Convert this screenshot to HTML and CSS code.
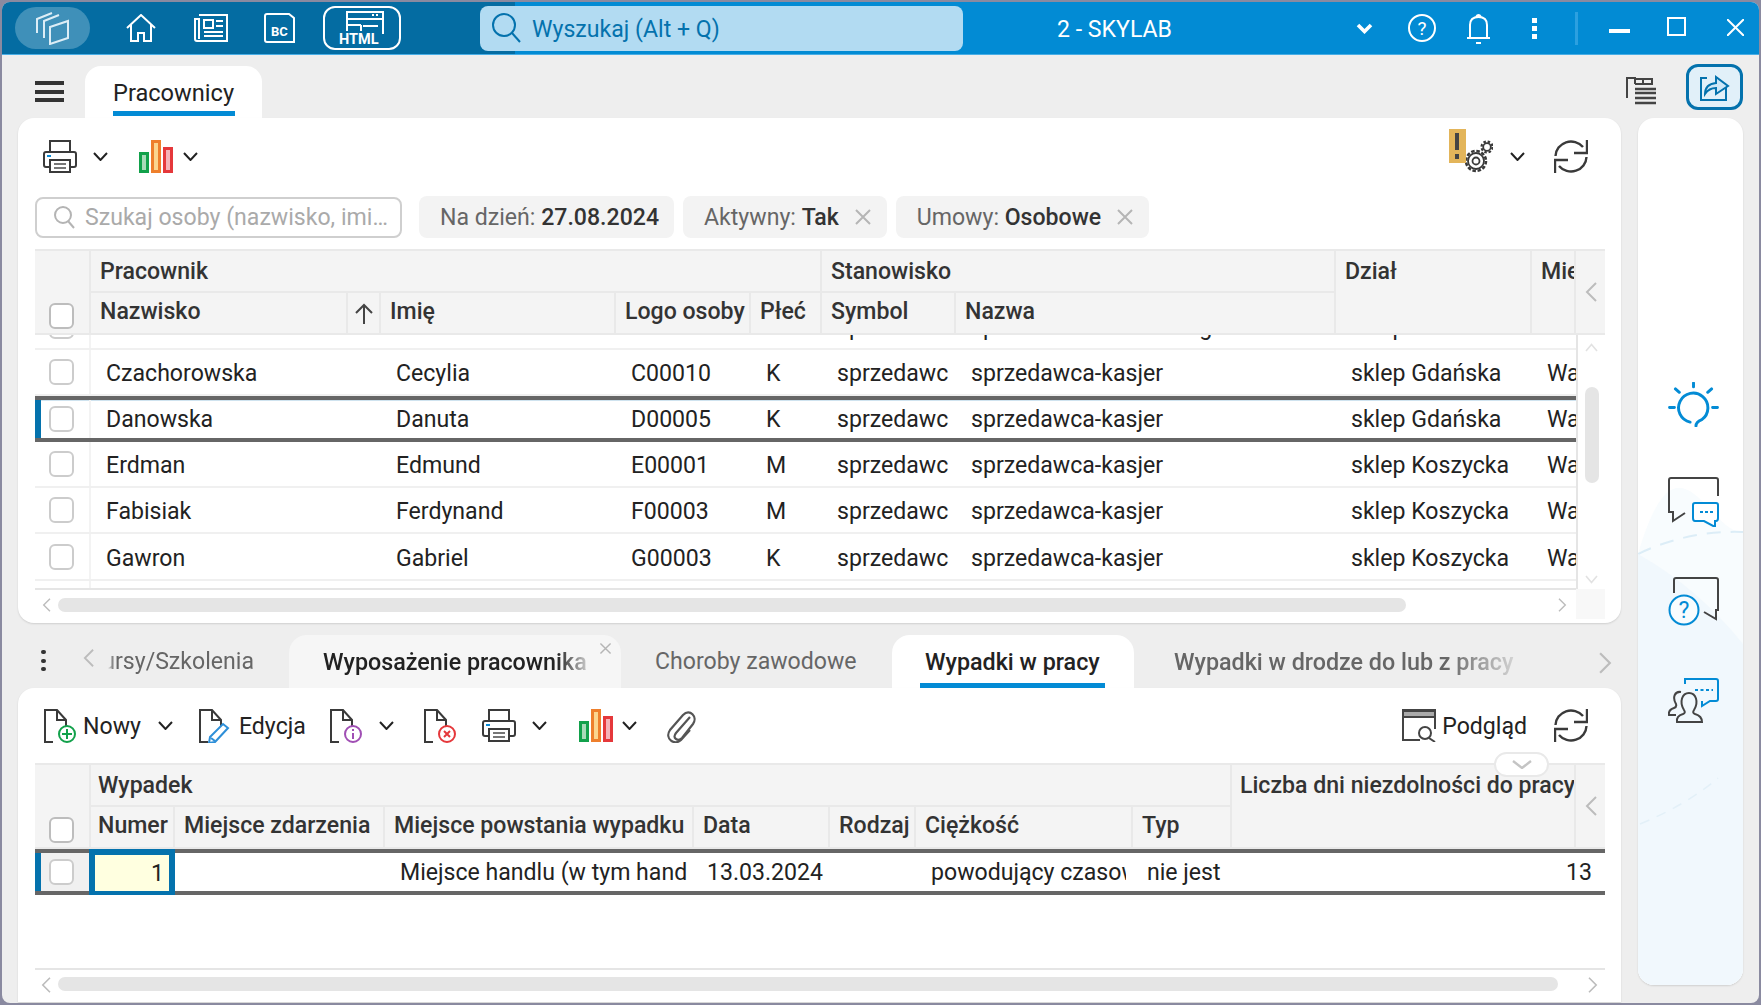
FILE: index.html
```html
<!DOCTYPE html>
<html lang="pl">
<head>
<meta charset="utf-8">
<title>Pracownicy</title>
<link rel="stylesheet" href="styles.css">
</head>
<body>
<svg class="defs" width="0" height="0">
  <defs>
    <symbol id="i-chev" viewBox="0 0 15 9"><path d="M1 1l6.5 7L14 1" fill="none" stroke="#222" stroke-width="2"/></symbol>
    <symbol id="i-print" viewBox="0 0 34 33">
      <g fill="none" stroke="#3a3a3a" stroke-width="2">
        <path d="M7 12V1h20v11"/>
        <path d="M7 27H3q-2 0-2-2V14q0-2 2-2h28q2 0 2 2v11q0 2-2 2h-4"/>
        <path d="M7 20h20v12H7z" fill="#fff"/>
        <path d="M11 24h12M11 28h12" stroke="#777"/>
      </g>
      <path d="M4 16h4" stroke="#0a8bd6" stroke-width="2"/>
    </symbol>
    <symbol id="i-chart" viewBox="0 0 34 33">
      <rect x="1.5" y="13.5" width="7" height="18" fill="#a9dbb9" stroke="#12a14b" stroke-width="3"/>
      <rect x="13.5" y="1.5" width="7" height="30" fill="#fbd58f" stroke="#ee7f2c" stroke-width="3"/>
      <rect x="25.5" y="8.5" width="7" height="23" fill="#f5b3b8" stroke="#e5383b" stroke-width="3"/>
    </symbol>
    <symbol id="i-refresh" viewBox="0 0 34 33">
      <g fill="none" stroke="#3a3a3a" stroke-width="2.4">
        <path d="M1.500 16A15.500 15 0 0 1 29 7"/>
        <path d="M33 0v13H20"/>
        <path d="M32.500 17A15.500 15 0 0 1 5 26"/>
        <path d="M1 33V20h13"/>
      </g>
    </symbol>
    <symbol id="i-doc" viewBox="0 0 32 34">
      <path d="M9 33H1V1h12l9 10v6M13 1v10h9" fill="none" stroke="#3a3a3a" stroke-width="2"/>
    </symbol>
    <symbol id="i-left" viewBox="0 0 12 20"><path d="M11 1L2 10l9 9" fill="none" stroke="#bcbcbc" stroke-width="2"/></symbol>
    <symbol id="i-right" viewBox="0 0 12 20"><path d="M1 1l9 9-9 9" fill="none" stroke="#bcbcbc" stroke-width="2"/></symbol>
    <symbol id="i-x" viewBox="0 0 18 18"><path d="M2 2l14 14M16 2L2 16" fill="none" stroke="#b5b5b5" stroke-width="2"/></symbol>
  </defs>
</svg>

<div class="window">
  <header class="titlebar">
    <div class="app-pill">
      <svg width="36" height="34" viewBox="0 0 36 34" fill="none" stroke="#dcedf6" stroke-width="2"><path d="M17 16l18-6v17l-18 6z"/><path d="M11 27V10l15-6"/><path d="M4 22V8l15-6"/></svg>
    </div>
    <svg class="ti ti-home" width="30" height="28" viewBox="0 0 30 28" fill="none" stroke="#fff" stroke-width="2"><path d="M1 14L15 1l14 13"/><path d="M5 11v16h7v-8h6v8h7V11"/></svg>
    <svg class="ti ti-news" width="34" height="28" viewBox="0 0 34 28" fill="none" stroke="#fff" stroke-width="2"><path d="M5 1h28v26H3q-2 0-2-2V5h4v20"/><rect x="10" y="6" width="9" height="8"/><path d="M22 7h7M22 12h7M10 18h19M10 22h19"/></svg>
    <svg class="ti ti-bc" width="31" height="30" viewBox="0 0 31 30"><path d="M3 1h22l5 4v24H3q-2 0-2-2V3q0-2 2-2z" fill="none" stroke="#fff" stroke-width="2"/><text x="7" y="23" class="svg-bc">BC</text></svg>
    <div class="html-btn">
      <svg width="58" height="38" viewBox="0 0 58 38" fill="none" stroke="#fff" stroke-width="2"><path d="M14 22V3h36v22"/><path d="M14 10h36M14 16h14M28 16v6M30 17h15"/><path d="M39 6h8" stroke-dasharray="2 2"/><text x="6" y="35" class="svg-html">HTML</text></svg>
    </div>
    <div class="topsearch">
      <svg width="30" height="30" viewBox="0 0 30 30" fill="none" stroke="#0472ad" stroke-width="2"><circle cx="13" cy="12" r="11"/><path d="M21 20l8 9"/></svg>
      <span class="topsearch-text">Wyszukaj (Alt + Q)</span>
    </div>
    <div class="company">2 - SKYLAB</div>
    <svg class="ti ti-chev" width="17" height="11" viewBox="0 0 17 11"><path d="M2 2l6.500 6.500L15 2" fill="none" stroke="#fff" stroke-width="3.600"/></svg>
    <svg class="ti ti-help" width="28" height="28" viewBox="0 0 28 28"><circle cx="14" cy="14" r="13" fill="none" stroke="#fff" stroke-width="2"/><text x="14" y="21" class="svg-q">?</text></svg>
    <svg class="ti ti-bell" width="23" height="31" viewBox="0 0 23 31" fill="none" stroke="#fff" stroke-width="2"><path d="M9 4q2.500-4 5 0"/><path d="M3 24V12q0-8 8.500-8T20 12v12"/><path d="M0 25h23"/><path d="M9 30h5"/></svg>
    <div class="ti ti-dots"><i></i><i></i><i></i></div>
    <div class="ti ti-sep"></div>
    <div class="ti ti-min"></div>
    <div class="ti ti-max"></div>
    <svg class="ti ti-close" width="17" height="17" viewBox="0 0 17 17"><path d="M0 0l17 17M17 0L0 17" fill="none" stroke="#fff" stroke-width="2"/></svg>
  </header>

  <div class="toprow">
    <div class="burger"><i></i><i></i><i></i></div>
    <div class="pagetab"><span class="pagetab-label">Pracownicy</span></div>
    <svg class="flaglist" width="30" height="28" viewBox="0 0 30 28"><g fill="none" stroke="#444" stroke-width="2"><path d="M1 21V1h8v6M9 2h17v5H9"/><path d="M17 2v5"/></g><path d="M9 12h21M9 16h21M9 21h21M9 26h21" stroke="#444" stroke-width="2.400"/></svg>
    <div class="sharebtn">
      <svg width="30" height="30" viewBox="0 0 30 30" fill="none" stroke="#0472ad" stroke-width="2"><path d="M7 6H1v22h25V16"/><path d="M5 22q0-10 11-11V5l12 9-12 8v-6q-7 0-11 6z" fill="#cfe8f7"/></svg>
    </div>
  </div>

  <div class="workspace">
    <main class="maincol">
      <section class="card card-top">
        <div class="toolbar toolbar-top">
          <svg class="ic34"><use href="#i-print"/></svg>
          <svg class="chev chev-a"><use href="#i-chev"/></svg>
          <svg class="ic34 chart-a"><use href="#i-chart"/></svg>
          <svg class="chev chev-b"><use href="#i-chev"/></svg>
          <div class="gears">
            <svg width="30" height="33" viewBox="0 0 30 33" fill="none" stroke="#3a3a3a">
              <circle cx="13" cy="21" r="8" stroke-width="1.800"/>
              <circle cx="13" cy="21" r="10" stroke-width="2.500" stroke-dasharray="3.500 1.740"/>
              <circle cx="13" cy="21" r="3.500" stroke-width="1.800"/>
              <circle cx="24" cy="7" r="3.800" stroke-width="1.800"/>
              <circle cx="24" cy="7" r="5.500" stroke-width="2.200" stroke-dasharray="2.500 1.820"/>
            </svg>
            <span class="warn"><i class="warn-bar"></i><i class="warn-dot"></i></span>
          </div>
          <svg class="chev chev-c"><use href="#i-chev"/></svg>
          <svg class="ic34 refresh"><use href="#i-refresh"/></svg>
        </div>

        <div class="filters">
          <div class="person-search">
            <svg width="21" height="23" viewBox="0 0 21 23" fill="none" stroke="#b4b4b4" stroke-width="2"><circle cx="9" cy="9" r="8"/><path d="M14 15l6 7"/></svg>
            <span>Szukaj osoby (nazwisko, imi…</span>
          </div>
          <div class="chip chip-date">Na dzień:&nbsp;<b>27.08.2024</b></div>
          <div class="chip">Aktywny:&nbsp;<b>Tak</b><svg class="chip-x"><use href="#i-x"/></svg></div>
          <div class="chip">Umowy:&nbsp;<b>Osobowe</b><svg class="chip-x"><use href="#i-x"/></svg></div>
        </div>

        <div class="ghead ghead-top">
          <div class="hc hc-check"><span class="cb cb-head"></span></div>
          <div class="hc hc-prac">Pracownik</div>
          <div class="hc hc-stan">Stanowisko</div>
          <div class="hc hc-dzial">Dział</div>
          <div class="hc hc-mie">Miejsce pracy</div>
          <div class="hc hc-arrow"><svg class="arrow-left"><use href="#i-left"/></svg></div>
          <div class="hc hc-r2">Nazwisko</div>
          <div class="hc hc-r2 hc-sort"><svg width="18" height="21" viewBox="0 0 18 21" fill="none" stroke="#444" stroke-width="2"><path d="M9 21V2M1 10l8-8 8 8"/></svg></div>
          <div class="hc hc-r2">Imię</div>
          <div class="hc hc-r2">Logo osoby</div>
          <div class="hc hc-r2">Płeć</div>
          <div class="hc hc-r2">Symbol</div>
          <div class="hc hc-r2">Nazwa</div>
        </div>

        <div class="gbody">
          <div class="rows">
            <div class="row row-cut">
              <div class="c c-cb"><span class="cb"></span></div><div class="c">Borowska</div><div class="c">Beata</div><div class="c">B00007</div><div class="c">K</div><div class="c">sprzedawc</div><div class="c">sprzedawca-kierowca grona</div><div class="c">sklep Gdańska</div><div class="c">Warszawa</div>
            </div>
            <div class="row">
              <div class="c c-cb"><span class="cb"></span></div><div class="c">Czachorowska</div><div class="c">Cecylia</div><div class="c">C00010</div><div class="c">K</div><div class="c">sprzedawc</div><div class="c">sprzedawca-kasjer</div><div class="c">sklep Gdańska</div><div class="c">Warszawa</div>
            </div>
            <div class="row row-sel">
              <div class="c c-cb"><span class="cb"></span></div><div class="c">Danowska</div><div class="c">Danuta</div><div class="c">D00005</div><div class="c">K</div><div class="c">sprzedawc</div><div class="c">sprzedawca-kasjer</div><div class="c">sklep Gdańska</div><div class="c">Warszawa</div>
            </div>
            <div class="row">
              <div class="c c-cb"><span class="cb"></span></div><div class="c">Erdman</div><div class="c">Edmund</div><div class="c">E00001</div><div class="c">M</div><div class="c">sprzedawc</div><div class="c">sprzedawca-kasjer</div><div class="c">sklep Koszycka</div><div class="c">Warszawa</div>
            </div>
            <div class="row">
              <div class="c c-cb"><span class="cb"></span></div><div class="c">Fabisiak</div><div class="c">Ferdynand</div><div class="c">F00003</div><div class="c">M</div><div class="c">sprzedawc</div><div class="c">sprzedawca-kasjer</div><div class="c">sklep Koszycka</div><div class="c">Warszawa</div>
            </div>
            <div class="row row-tall">
              <div class="c c-cb"><span class="cb"></span></div><div class="c">Gawron</div><div class="c">Gabriel</div><div class="c">G00003</div><div class="c">K</div><div class="c">sprzedawc</div><div class="c">sprzedawca-kasjer</div><div class="c">sklep Koszycka</div><div class="c">Warszawa</div>
            </div>
            <div class="rows-tail"><div class="tail-cb"></div></div>
          </div>
          <div class="vscroll">
            <svg class="v-up" width="13" height="9" viewBox="0 0 13 9"><path d="M1 8l5.500-6.500L12 8" fill="none" stroke="#e2e2e2" stroke-width="1.600"/></svg>
            <div class="v-thumb"></div>
            <svg class="v-down" width="13" height="9" viewBox="0 0 13 9"><path d="M1 1l5.500 6.500L12 1" fill="none" stroke="#e2e2e2" stroke-width="1.600"/></svg>
          </div>
        </div>

        <div class="hscroll hscroll-top">
          <svg class="hs-left"><use href="#i-left"/></svg>
          <div class="hs-thumb"></div>
          <svg class="hs-right"><use href="#i-right"/></svg>
          <div class="hs-corner"></div>
        </div>
      </section>

      <nav class="tabsrow">
        <div class="tdots"><i></i><i></i><i></i></div>
        <svg class="t-prev"><use href="#i-left"/></svg>
        <div class="tab-clipped"><span>Kursy/Szkolenia</span></div>
        <div class="dtab dtab-open"><span class="fade">Wyposażenie pracownika</span><svg class="dtab-x"><use href="#i-x"/></svg></div>
        <div class="ptab ptab-chor">Choroby zawodowe</div>
        <div class="dtab dtab-active"><span class="dtab-label">Wypadki w pracy</span></div>
        <div class="ptab ptab-dro"><span class="fade fade-dro">Wypadki w drodze do lub z pracy</span></div>
        <svg class="t-next"><use href="#i-right"/></svg>
      </nav>

      <section class="card card-bottom">
        <div class="toolbar toolbar-bottom">
          <svg class="docicon" viewBox="0 0 32 34"><use href="#i-doc"/><circle cx="23" cy="25" r="8" fill="#fff" stroke="#12a14b" stroke-width="2"/><path d="M23 20v10M18 25h10" stroke="#12a14b" stroke-width="2"/></svg>
          <span class="tb-label tb-nowy">Nowy</span>
          <svg class="chev chev-nowy"><use href="#i-chev"/></svg>
          <svg class="docicon doc-ed" viewBox="0 0 32 34"><use href="#i-doc"/><path d="M24 15l5 4-13 14-6 1 1-6z" fill="#fff" stroke="#2d8fd8" stroke-width="2"/><path d="M12 29l4 3" stroke="#2d8fd8" stroke-width="2"/></svg>
          <span class="tb-label tb-ed">Edycja</span>
          <svg class="docicon doc-info" viewBox="0 0 32 34"><use href="#i-doc"/><circle cx="23" cy="25" r="8" fill="#fff" stroke="#a04fb4" stroke-width="2"/><path d="M23 24v6M23 20v2" stroke="#a04fb4" stroke-width="2"/></svg>
          <svg class="chev chev-info"><use href="#i-chev"/></svg>
          <svg class="docicon doc-del" viewBox="0 0 32 34"><use href="#i-doc"/><circle cx="23" cy="25" r="8" fill="#fff" stroke="#e5383b" stroke-width="2"/><path d="M20 22l6 6M26 22l-6 6" stroke="#e5383b" stroke-width="2"/></svg>
          <svg class="ic34 print-b"><use href="#i-print"/></svg>
          <svg class="chev chev-print"><use href="#i-chev"/></svg>
          <svg class="ic34 chart-b"><use href="#i-chart"/></svg>
          <svg class="chev chev-chart"><use href="#i-chev"/></svg>
          <svg class="clip" width="30" height="34" viewBox="0 0 30 34" fill="none" stroke="#555" stroke-width="2.200"><path d="M24 8L10 24q-3 4 0 6t6-1L27 15c5-7-3-16-10-9L4 21c-6 9 5 16 11 10l9-10"/></svg>
          <svg class="podglad-ic" width="34" height="33" viewBox="0 0 34 33" fill="none" stroke="#444" stroke-width="2"><path d="M33 20V1H1v30h17"/><path d="M1 2h32v6H1z" fill="#aaa"/><circle cx="23" cy="24" r="6"/><path d="M27 29l6 4"/></svg>
          <span class="tb-label tb-pod">Podgląd</span>
          <svg class="ic34 refresh refresh-b"><use href="#i-refresh"/></svg>
        </div>

        <div class="grid2">
          <div class="collapse-pill"><svg width="20" height="9" viewBox="0 0 20 9"><path d="M1 1l9 7 9-7" fill="none" stroke="#c4c4c4" stroke-width="2.400"/></svg></div>
          <div class="ghead ghead-bottom">
            <div class="hc hc-check"><span class="cb cb-head"></span></div>
            <div class="hc hc-wyp">Wypadek</div>
            <div class="hc hc-licz">Liczba dni niezdolności do pracy</div>
            <div class="hc hc-arrow"><svg class="arrow-left"><use href="#i-left"/></svg></div>
            <div class="hc hc-r2 hc-num">Numer</div>
            <div class="hc hc-r2">Miejsce zdarzenia</div>
            <div class="hc hc-r2">Miejsce powstania wypadku</div>
            <div class="hc hc-r2">Data</div>
            <div class="hc hc-r2">Rodzaj</div>
            <div class="hc hc-r2">Ciężkość</div>
            <div class="hc hc-r2">Typ</div>
          </div>
          <div class="row2">
            <div class="c2 c2-cb"><span class="cb"></span></div>
            <div class="c2 c2-num">1</div>
            <div class="c2"></div>
            <div class="c2"><span class="clip-text clip-miejsce">Miejsce handlu (w tym handlu detalicznego)</span></div>
            <div class="c2 c2-date">13.03.2024</div>
            <div class="c2"></div>
            <div class="c2"><span class="clip-text clip-ciez">powodujący czasową niezdolność</span></div>
            <div class="c2 c2-typ">nie jest</div>
            <div class="c2 c2-days">13</div>
          </div>
          <div class="row2-space"></div>
          <div class="hscroll hscroll-bottom">
            <svg class="hs-left"><use href="#i-left"/></svg>
            <div class="hs-thumb"></div>
            <svg class="hs-right"><use href="#i-right"/></svg>
          </div>
        </div>
      </section>
    </main>

    <aside class="sidepanel">
      <svg class="side-deco" width="105" height="867" viewBox="0 0 105 867" fill="none">
        <path d="M0 436C40 300 70 416 105 414V867H0z" fill="#f8fcfe"/>
        <path d="M0 436Q50 412 105 414" stroke="#dcedf7" stroke-width="2" stroke-dasharray="14 10"/>
        <path d="M0 436Q60 470 105 526V867H0z" fill="#f1f8fd"/>
        <path d="M2 706Q50 686 80 660" stroke="#e3f0f8" stroke-width="1.500" stroke-dasharray="10 8"/>
      </svg>
      <svg class="side-ic" width="52" height="45" viewBox="0 0 52 46" fill="none" stroke="#038bd5" stroke-width="3" stroke-linecap="round"><path d="M22 41A15 15 0 1 1 34 38.500Q28 41 28 45"/><path d="M25.500 1v4M7 7l4 3.500M44 7l-4 3.500M1 26h5M45 26h5"/></svg>
      <svg class="side-ic" width="52" height="50" viewBox="0 0 52 50" fill="none" stroke-width="2"><path d="M50 19V3q0-2-2-2H3Q1 1 1 3v32h4v9l12-8" stroke="#444"/><path d="M27 26h21q2 0 2 2v13q0 3-2 3h-1v6l-11-6h-9q-2 0-2-3V28q0-2 2-2z" stroke="#038bd5" fill="#fff"/><path d="M32 35h14" stroke="#038bd5" stroke-dasharray="3 2"/></svg>
      <svg class="side-ic" width="52" height="50" viewBox="0 0 52 50" fill="none" stroke-width="2"><path d="M6 16V3q0-2 2-2h40q2 0 2 2v30h-2v9l-12-7" stroke="#444"/><circle cx="16" cy="33" r="14.500" stroke="#038bd5" fill="#f8fcfe"/><text x="16" y="41" class="svg-side-q">?</text></svg>
      <svg class="side-ic" width="52" height="46" viewBox="0 0 52 46" fill="none" stroke-width="2"><path d="M17 7V2h31q2 0 2 2v18q0 2-2 2h-6l-8 5v-5" stroke="#038bd5"/><path d="M27 13h18" stroke="#038bd5" stroke-dasharray="3 2.500"/><path d="M9 45q-1-6 6-8 3-1 1-4c-5-8-2-17 5-17s10 9 5 17q-2 3 1 4 7 2 7 8z" stroke="#444"/><path d="M13 15C7 14 4 20 8 27q1 3-2 4-6 2-5 7h7" stroke="#444"/></svg>
    </aside>
  </div>
</div>
</body>
</html>
```

FILE: styles.css
```css
* { box-sizing: border-box; }
html, body { margin: 0; height: 100%; }
body {
  width: 1761px;
  height: 1005px;
  overflow: hidden;
  padding: 2px;
  background: #8a8aa0;
  font-family: Roboto, "Liberation Sans", sans-serif;
  font-size: 23.100px;
  color: #222;
}
.defs { display: block; position: absolute; }
i { display: block; }

.window {
  width: 1757px;
  height: 1001px;
  background: #eeeeee;
  border-radius: 8px;
  overflow: hidden;
  display: flex;
  flex-direction: column;
}

/* title bar */
.titlebar {
  height: 53px;
  flex: none;
  display: flex;
  align-items: center;
  padding: 0 15px 0 13px;
  background: linear-gradient(90deg, #046ca2 0 513px, #028bd4 513px);
  border-bottom: 1px solid #48aee6;
}
.app-pill {
  width: 75px;
  height: 42px;
  border-radius: 21px;
  background: #3f90b9;
  display: flex;
  align-items: center;
  justify-content: center;
  padding-right: 4px;
  flex: none;
}
.ti { flex: none; }
.ti-home { margin-left: 36px; }
.ti-news { margin-left: 38px; }
.ti-bc { margin-left: 36px; }
.html-btn {
  margin-left: 28px;
  width: 78px;
  height: 44px;
  border: 2.500px solid #fff;
  border-radius: 12px;
  display: flex;
  align-items: center;
  justify-content: center;
  flex: none;
}
.svg-bc { font: 700 13px Roboto, sans-serif; fill: #fff; stroke: none; }
.svg-html { font: 700 14.500px Roboto, sans-serif; fill: #fff; stroke: none; }
.svg-q { font: 400 19px Roboto, sans-serif; fill: #fff; text-anchor: middle; }
.svg-side-q { font: 400 23px Roboto, sans-serif; fill: #038bd5; stroke: none; text-anchor: middle; }
.topsearch {
  margin-left: 79px;
  width: 483px;
  height: 45px;
  flex: none;
  border-radius: 8px;
  background: #b2dbf2;
  color: #0472ad;
  display: flex;
  align-items: center;
  padding-left: 11px;
  gap: 11px;
}
.topsearch-text { padding-top: 2px; }
.company { margin-left: 94px; width: 299px; padding-top: 2px; color: #fff; flex: none; }
.ti-help { margin-left: 35px; }
.ti-bell { margin-left: 31px; }
.ti-dots { margin-left: 42px; width: 5px; display: flex; flex-direction: column; gap: 3px; }
.ti-dots i { height: 5px; background: #fff; }
.ti-sep { margin-left: 38px; width: 3px; height: 33px; background: #2ca0e0; }
.ti-min { margin-left: 31px; width: 21px; height: 4px; background: #fff; margin-top: 6px; }
.ti-max { margin-left: 37px; width: 19px; height: 19px; border: 2px solid #fff; margin-top: -4px; }
.ti-close { margin-left: 41px; margin-top: -1px; }

/* page tab row */
.toprow {
  height: 63px;
  flex: none;
  display: flex;
  align-items: flex-end;
  padding: 0 16px 0 33px;
}
.burger { width: 29px; height: 21px; margin-bottom: 16px; display: flex; flex-direction: column; justify-content: space-between; flex: none; }
.burger i { height: 4px; background: #333; }
.pagetab {
  margin-left: 21px;
  width: 177px;
  height: 52px;
  background: #fff;
  border-radius: 16px 16px 0 0;
  padding-left: 28px;
  flex: none;
}
.pagetab-label {
  display: block;
  height: 50px;
  padding-top: 13px;
  width: 122px;
  border-bottom: 5px solid #038bd5;
  color: #222;
  font-size: 23.600px;
  line-height: 28px;
  white-space: nowrap;
}
.flaglist { margin-left: auto; margin-bottom: 13px; }
.sharebtn {
  margin-left: 30px;
  width: 57px;
  height: 46px;
  margin-bottom: 8px;
  border: 3px solid #0472ad;
  border-radius: 12px;
  background: #e1f0f9;
  display: flex;
  align-items: center;
  justify-content: center;
  flex: none;
}

/* workspace */
.workspace { flex: 1; min-height: 0; display: flex; padding: 0 16px 1px 16px; gap: 17px; }
.maincol { width: 1603px; flex: none; display: flex; flex-direction: column; }
.card { background: #fff; box-shadow: 0 1px 2px rgba(0,0,0,.13); padding: 0 16px 0 17px; }
.card-top { height: 505px; border-radius: 16px; flex: none; }
.card-bottom { flex: 1; min-height: 0; border-radius: 16px 16px 0 0; }

.sidepanel {
  position: relative;
  width: 105px;
  flex: none;
  margin-bottom: 17px;
  border-radius: 16px;
  background: #fff;
  box-shadow: 0 1px 2px rgba(0,0,0,.13);
  overflow: hidden;
  display: flex;
  flex-direction: column;
  align-items: center;
  gap: 50px;
  padding: 264px 0 0 7px;
}
.side-deco { position: absolute; left: 0; top: 0; }
.side-ic { position: relative; flex: none; }

/* toolbars */
.toolbar { display: flex; align-items: center; padding: 0 17px 0 8px; }
.toolbar-top { height: 76px; margin-bottom: 2px; }
.toolbar-bottom { height: 75px; padding-left: 9px; }
.ic34 { width: 34px; height: 33px; flex: none; }
.chev { width: 15px; height: 9px; flex: none; }
.chev-a { margin-left: 16px; }
.chart-a { margin-left: 31px; }
.chev-b { margin-left: 10px; }
.gears { position: relative; width: 30px; height: 33px; margin-left: auto; flex: none; }
.warn {
  position: absolute;
  left: -14px;
  top: -11px;
  width: 17px;
  height: 34px;
  background: #e3b55a;
  display: block;
}
.warn-bar { position: absolute; left: 6px; top: 4px; width: 4px; height: 17px; background: #444; }
.warn-dot { position: absolute; left: 6px; top: 25px; width: 4px; height: 5px; background: #444; }
.chev-c { margin-left: 17px; }
.refresh { margin-left: 29px; }
.refresh-b { margin-left: 27px; }
.docicon { width: 32px; height: 34px; flex: none; }
.tb-label { flex: none; white-space: nowrap; padding-top: 2px; }
.tb-nowy { margin-left: 7px; }
.chev-nowy { margin-left: 17px; }
.doc-ed { margin-left: 26px; }
.tb-ed { margin-left: 8px; }
.doc-info { margin-left: 24px; }
.chev-info { margin-left: 17px; }
.doc-del { margin-left: 30px; }
.print-b { margin-left: 26px; }
.chev-print { margin-left: 16px; }
.chart-b { margin-left: 32px; }
.chev-chart { margin-left: 9px; }
.clip { margin-left: 29px; flex: none; }
.podglad-ic { margin-left: auto; flex: none; }
.tb-pod { margin-left: 6px; }

/* filters */
.filters { display: flex; height: 42px; margin-bottom: 11px; }
.person-search {
  width: 367px;
  height: 41px;
  margin-top: 1px;
  border: 2px solid #cfcfcf;
  border-radius: 8px;
  display: flex;
  align-items: center;
  padding-left: 17px;
  gap: 10px;
  color: #aaa;
  white-space: nowrap;
  overflow: hidden;
  flex: none;
}
.chip {
  margin-left: 9px;
  height: 42px;
  padding: 0 15px 0 21px;
  background: #f3f3f3;
  border-radius: 8px;
  display: flex;
  align-items: center;
  color: #666;
  white-space: nowrap;
  flex: none;
}
.chip-date { margin-left: 17px; }
.chip b { font-weight: 500; color: #333; }
.chip-x { width: 18px; height: 18px; margin-left: 15px; flex: none; }

/* grid header */
.ghead {
  display: grid;
  gap: 2px;
  padding: 2px 0;
  height: 86px;
  grid-template-rows: 40px 40px;
  background: #e9e9e9;
  flex: none;
}
.ghead-top { grid-template-columns: 54px 255px 31px 233px 133px 69px 132px 378px 194px 42px 29px; }
.ghead-bottom { grid-template-columns: 54px 82px 208px 307px 134px 84px 215px 97px 342px 29px; }
.hc {
  background: #f4f4f4;
  padding: 6px 0 0 9px;
  font-weight: 500;
  color: #333;
  line-height: 30px;
  white-space: nowrap;
  overflow: hidden;
}
.hc-r2 { grid-row: 2; padding-top: 4px; }
.ghead-bottom .hc-num, .ghead-bottom .hc-wyp { padding-left: 7px; }
.ghead-bottom .hc-licz { padding-left: 8px; }
.hc-check { grid-column: 1; grid-row: 1 / 3; padding: 0 0 4px 14px !important; display: flex; align-items: flex-end; }
.hc-prac { grid-column: 2 / 7; grid-row: 1; }
.hc-stan { grid-column: 7 / 9; grid-row: 1; }
.hc-dzial { grid-column: 9; grid-row: 1 / 3; }
.hc-mie { grid-column: 10; grid-row: 1 / 3; }
.hc-arrow { grid-row: 1 / 3; padding: 0 !important; display: flex; align-items: center; justify-content: center; }
.ghead-top .hc-arrow { grid-column: 11; }
.ghead-bottom .hc-arrow { grid-column: 10; }
.hc-sort { padding: 0; display: flex; align-items: center; justify-content: center; }
.hc-wyp { grid-column: 2 / 9; grid-row: 1; }
.hc-licz { grid-column: 9; grid-row: 1 / 3; }
.arrow-left { width: 12px; height: 20px; }

.cb {
  display: block;
  width: 25px;
  height: 26px;
  border: 2px solid #cccccc;
  border-radius: 6px;
  background: #fff;
  flex: none;
}
.cb-head { border-color: #bdbdbd; }

/* top grid body */
.gbody { display: flex; height: 255px; overflow: hidden; }
.rows { width: 1541px; flex: none; overflow: hidden; }
.row {
  display: grid;
  grid-template-columns: 56px 290px 235px 135px 71px 134px 380px 196px 44px;
  height: 46px;
  border-bottom: 2px solid #f0f0f0;
  align-items: center;
}
.row-cut { margin-top: -31px; }
.row-tall { height: 47px; }
.row-sel {
  border-top: 4px solid #666;
  border-bottom: 4px solid #666;
  box-shadow: inset 6px 0 0 #0472ad, inset 0 1px 0 #cfe3ef;
}
.c { padding: 4px 0 0 15px; overflow: hidden; white-space: nowrap; color: #222; line-height: 36px; }
.row-sel .c { padding-top: 2px; }
.c.c-cb, .row-sel .c.c-cb {
  height: 100%;
  padding: 0 0 0 14px;
  border-right: 2px solid #f3f3f3;
  display: flex;
  align-items: center;
}
.rows-tail { height: 9px; border-bottom: 2px solid #e5e5e5; }
.tail-cb { width: 56px; height: 7px; border-right: 2px solid #f3f3f3; }
.vscroll {
  width: 29px;
  flex: none;
  border-left: 2px solid #e5e5e5;
  padding: 8px 0 0 7px;
  display: flex;
  flex-direction: column;
}
.v-up, .v-down { flex: none; }
.v-thumb { width: 14px; height: 96px; margin-top: 35px; background: #e5e5e5; border-radius: 7px; flex: none; }
.v-down { margin-top: 92px; }

/* horizontal scrollbars */
.hscroll { display: flex; align-items: flex-start; }
.hscroll-top { height: 29px; }
.hscroll-top > svg, .hs-thumb { margin-top: 8px; }
.hs-left { width: 9px; height: 14px; margin-left: 7px; flex: none; }
.hs-thumb { height: 14px; background: #e5e5e5; border-radius: 7px; margin-left: 7px; flex: none; }
.hs-right { width: 9px; height: 14px; margin-left: auto; flex: none; }
.hscroll-top .hs-thumb { width: 1348px; }
.hscroll-top .hs-right { margin-right: 9px; }
.hs-corner { width: 29px; height: 30px; background: #f8f8f8; flex: none; margin-top: -1px; }
.hscroll-bottom { padding-top: 7px; }
.hscroll-bottom .hs-thumb { margin-top: 0; width: 1500px; }
.hscroll-bottom .hs-left, .hscroll-bottom .hs-right { width: 10px; height: 16px; }
.hscroll-bottom .hs-left { margin-left: 6px; }
.hscroll-bottom .hs-right { margin-right: 7px; }

/* detail tabs */
.tabsrow { height: 65px; flex: none; display: flex; align-items: flex-end; color: #666; }
.tdots { margin-left: 23px; width: 5px; height: 21px; margin-bottom: 17px; display: flex; flex-direction: column; justify-content: space-between; flex: none; }
.tdots i { height: 4px; border-radius: 2px; background: #333; }
.t-prev { width: 11px; height: 20px; margin: 0 0 20px 37px; flex: none; }
.tab-clipped {
  margin-left: 14px;
  width: 146px;
  height: 53px;
  overflow: hidden;
  display: flex;
  justify-content: flex-end;
  align-items: center;
  white-space: nowrap;
  flex: none;
  -webkit-mask-image: linear-gradient(90deg, transparent 0, #000 6px);
  mask-image: linear-gradient(90deg, transparent 0, #000 6px);
}
.dtab {
  height: 53px;
  border-radius: 18px 18px 0 0;
  flex: none;
  display: flex;
  align-items: center;
  white-space: nowrap;
  font-weight: 500;
  font-size: 23.300px;
  color: #222;
}
.dtab-open { position: relative; margin-left: 35px; width: 332px; padding-left: 34px; background: #f6f6f6; }
.fade {
  display: block;
  width: 266px;
  overflow: hidden;
  -webkit-mask-image: linear-gradient(90deg, #000 88%, rgba(0,0,0,.15) 100%);
  mask-image: linear-gradient(90deg, #000 88%, rgba(0,0,0,.15) 100%);
}
.dtab-x { position: absolute; right: 9px; top: 7px; width: 13px; height: 13px; }
.ptab { height: 53px; display: flex; align-items: center; white-space: nowrap; flex: none; }
.ptab-chor { margin-left: 34px; width: 201px; }
.dtab-active { margin-left: 36px; width: 242px; background: #fff; padding-left: 28px; }
.dtab-label {
  display: block;
  width: 185px;
  height: 53px;
  padding: 13px 0 0 5px;
  line-height: 28px;
  border-bottom: 5px solid #038bd5;
}
.ptab-dro { margin-left: 40px; width: 340px; font-weight: 500; font-size: 23.300px; }
.fade-dro { width: 340px; -webkit-mask-image: linear-gradient(90deg, #000 80%, rgba(0,0,0,.2) 100%); mask-image: linear-gradient(90deg, #000 80%, rgba(0,0,0,.2) 100%); }
.t-next { width: 13px; height: 22px; margin: 0 9px 14px auto; flex: none; }

/* bottom grid */
.grid2 { position: relative; }
.collapse-pill {
  position: absolute;
  right: 56px;
  top: -11px;
  width: 55px;
  height: 25px;
  background: #fff;
  border: 2px solid #e9e9e9;
  border-radius: 13px;
  display: flex;
  align-items: center;
  justify-content: center;
  z-index: 1;
}
.row2 {
  display: grid;
  grid-template-columns: 54px 86px 209px 309px 136px 86px 217px 100px 373px;
  height: 46px;
}
.c2 {
  border-top: 4px solid #666;
  border-bottom: 4px solid #666;
  padding: 2px 0 0 16px;
  overflow: hidden;
  white-space: nowrap;
  color: #222;
  line-height: 36px;
}
.clip-text { display: block; overflow: hidden; }
.clip-miejsce { width: 287px; }
.clip-ciez { width: 195px; }
.c2-cb {
  padding: 0 0 0 14px;
  background: #f0f0f0;
  box-shadow: inset 6px 0 0 #0472ad;
  display: flex;
  align-items: center;
}
.c2-num {
  border: 6px solid #0472ad;
  border-bottom-width: 4px;
  background: #ffffe0;
  padding: 1px 5px 0 0;
  text-align: right;
  line-height: 35px;
}
.c2-date { padding-left: 14px; }
.c2-typ { padding-left: 15px; }
.c2-days { padding: 2px 13px 0 0; text-align: right; }
.row2-space { height: 75px; border-bottom: 2px solid #e5e5e5; }
```
